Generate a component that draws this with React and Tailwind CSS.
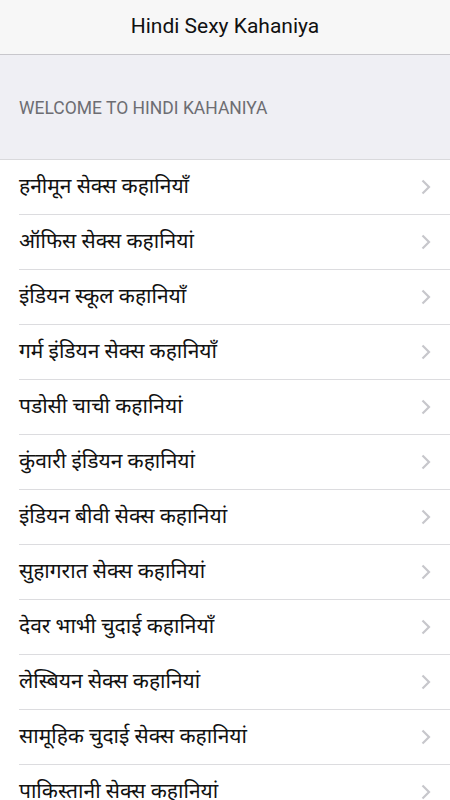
const items = [
  "हनीमून सेक्स कहानियाँ",
  "ऑफिस सेक्स कहानियां",
  "इंडियन स्कूल कहानियाँ",
  "गर्म इंडियन सेक्स कहानियाँ",
  "पडोसी चाची कहानियां",
  "कुंवारी इंडियन कहानियां",
  "इंडियन बीवी सेक्स कहानियां",
  "सुहागरात सेक्स कहानियां",
  "देवर भाभी चुदाई कहानियाँ",
  "लेस्बियन सेक्स कहानियां",
  "सामूहिक चुदाई सेक्स कहानियां",
  "पाकिस्तानी सेक्स कहानियां",
];

const Chevron = () => (
  <svg width="10" height="16" viewBox="0 0 10 16" className="shrink-0">
    <path d="M1.5 1.5 L8 8 L1.5 14.5" fill="none" stroke="#c7c7cc" strokeWidth="2.2" />
  </svg>
);

const App = () => {
  return (
    <div className="w-[450px] h-[800px] overflow-hidden bg-white font-['Roboto','Noto_Sans','Noto_Sans_Devanagari',sans-serif]">
      <div className="h-[55px] bg-[#f7f7f7] border-b border-[#c8c7cc] flex items-center justify-center">
        <h1 className="text-[21px] text-[#111]">Hindi Sexy Kahaniya</h1>
      </div>

      <div className="h-[105px] bg-[#efeff4] border-b border-[#d9d9dc] flex items-center px-[19px]">
        <p className="text-[17.5px] text-[#6d6d72] pt-[2px]">WELCOME TO HINDI KAHANIYA</p>
      </div>

      <ul className="pl-[19px]">
        {items.map((item) => (
          <li
            key={item}
            className="h-[55px] border-b border-[#dcdcdf] flex items-center justify-between pr-[19px]"
          >
            <span className="text-[21px] text-[#111]">{item}</span>
            <Chevron />
          </li>
        ))}
      </ul>
    </div>
  );
};

export default App;
